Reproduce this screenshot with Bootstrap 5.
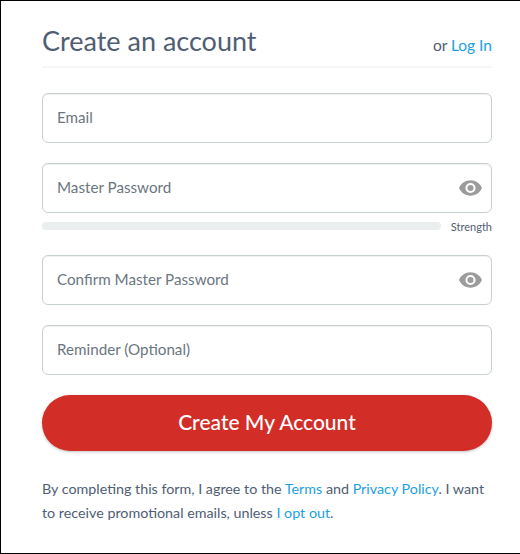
<!DOCTYPE html>
<html lang="en">
<head>
<meta charset="utf-8">
<title>Create an account</title>
<link href="https://cdn.jsdelivr.net/npm/bootstrap@5.3.0/dist/css/bootstrap.min.css" rel="stylesheet">
<style>
html,body{height:100%;margin:0}
body{background:#fff;font-family:"Lato","Open Sans",sans-serif;color:#4a5568}
.frame{height:554px;border-top:1px solid #000;border-left:1px solid #000;border-bottom:1px solid #000;padding:0 28px 0 41px}
.head-row{height:67px;border-bottom:2px solid #f5f6f6;margin-bottom:25px;padding-bottom:8px}
.head-title{font-size:27px;line-height:34px;font-weight:400;color:#4f5e73;margin:0}
.head-side{font-size:15.5px;color:#4f5e73;line-height:20px;padding-bottom:3px}
.link-blue{color:#1ba1e2;text-decoration:none}
.field-box{position:relative;height:50px;margin-bottom:20px}
.field-box.tight{margin-bottom:0}
.field-input{height:50px;border:1px solid #c9d0d0;border-radius:6px;font-size:15.2px;padding:0 14px 2px;color:#5f6b76;box-shadow:inset 0 1px 1px rgba(0,0,0,.06)}
.field-input::placeholder{color:#6b7680;opacity:1}
.eye-icon{position:absolute;right:10px;top:17px;width:23px;height:16px}
.meter-row{height:23px;margin-top:9px;margin-bottom:10px}
.meter-track{height:8px;width:399px;background:#ebeeee;border-radius:4px}
.meter-label{font-size:11px;line-height:10px;color:#4f5e73}
.submit-btn{height:56px;background:#d32d27;border:0;border-radius:28px;color:#fff;font-size:21px;font-weight:500;padding:0 0 3px;box-shadow:0 1px 3px rgba(0,0,0,.25)}
.submit-btn:hover{background:#d32d27;color:#fff}
.legal{font-size:14.3px;line-height:24px;color:#4f5e73;margin:26px 0 0}
</style>
</head>
<body>
<div class="frame">
  <div class="head-row d-flex justify-content-between align-items-end">
    <h1 class="head-title">Create an account</h1>
    <div class="head-side">or <a class="link-blue" href="#">Log In</a></div>
  </div>
  <form>
    <div class="field-box"><input class="form-control field-input" type="email" placeholder="Email"></div>
    <div class="field-box tight">
      <input class="form-control field-input" type="password" placeholder="Master Password">
      <svg class="eye-icon" viewBox="0 0 24 16" aria-hidden="true"><path fill="#9c9c9c" fill-rule="evenodd" d="M12 0C6.5 0 2 3.3 0 8c2 4.7 6.5 8 12 8s10-3.300 12-8c-2-4.700-6.500-8-12-8zm0 13.300A5.300 5.300 0 1 1 12 2.700a5.300 5.300 0 0 1 0 10.600zM12 4.800a3.200 3.200 0 1 0 0 6.400 3.200 3.200 0 0 0 0-6.400z"/></svg>
    </div>
    <div class="meter-row d-flex justify-content-between align-items-start">
      <div class="meter-track"></div>
      <div class="meter-label">Strength</div>
    </div>
    <div class="field-box">
      <input class="form-control field-input" type="password" placeholder="Confirm Master Password">
      <svg class="eye-icon" viewBox="0 0 24 16" aria-hidden="true"><path fill="#9c9c9c" fill-rule="evenodd" d="M12 0C6.5 0 2 3.3 0 8c2 4.7 6.5 8 12 8s10-3.300 12-8c-2-4.700-6.500-8-12-8zm0 13.300A5.300 5.300 0 1 1 12 2.700a5.300 5.300 0 0 1 0 10.600zM12 4.800a3.200 3.200 0 1 0 0 6.400 3.200 3.200 0 0 0 0-6.400z"/></svg>
    </div>
    <div class="field-box"><input class="form-control field-input" type="text" placeholder="Reminder (Optional)"></div>
    <button class="btn submit-btn w-100" type="button">Create My Account</button>
  </form>
  <p class="legal">By completing this form, I agree to the <a class="link-blue" href="#">Terms</a> and <a class="link-blue" href="#">Privacy Policy</a>. I want to receive promotional emails, unless <a class="link-blue" href="#">I opt out</a>.</p>
</div>
<script src="https://cdn.jsdelivr.net/npm/bootstrap@5.3.0/dist/js/bootstrap.bundle.min.js"></script>
</body>
</html>
